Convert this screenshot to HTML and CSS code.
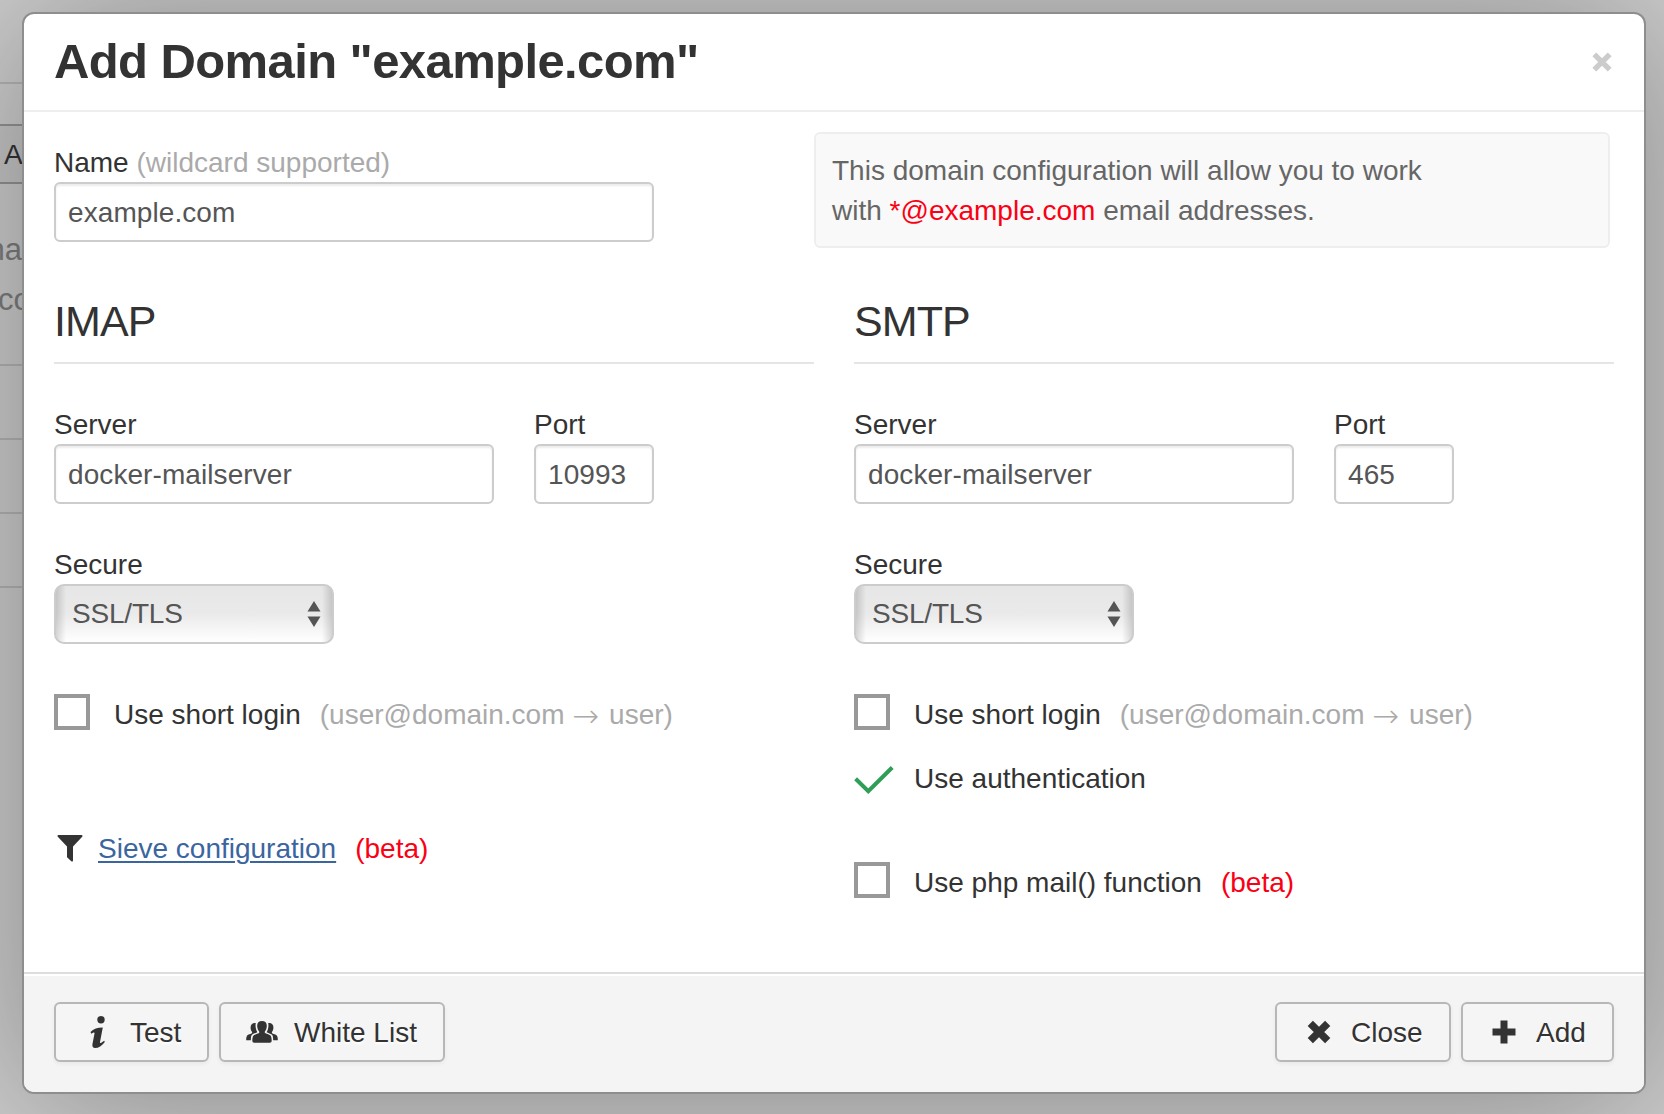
FILE: index.html
```html
<!DOCTYPE html>
<html lang="en">
<head>
<meta charset="utf-8">
<title>Add Domain</title>
<link rel="stylesheet" href="styles.css">
</head>
<body>
<div class="backdrop">
  <div class="bg-rule bg-rule-top"></div>
  <div class="bg-button">A</div>
  <div class="bg-text bg-text-one"><span>ma</span></div>
  <div class="bg-text bg-text-two"><span>co</span></div>
  <div class="bg-table"><i></i><i></i><i></i><i></i></div>
</div>
<div class="modal">
  <header class="modal-header">
    <h3 class="title">Add Domain "example.com"</h3>
    <span class="dismiss"><svg width="20" height="20" viewBox="0 0 20 20"><path d="M2.300 2.300 17.700 17.700M17.700 2.300 2.300 17.700" stroke="#ccc" stroke-width="5.400"/></svg></span>
  </header>
  <main class="modal-body">
    <section class="name-row">
      <div class="field field-name">
        <label class="label">Name <span class="hint">(wildcard supported)</span></label>
        <div class="input">example.com</div>
      </div>
      <div class="alert">This domain configuration will allow you to work<br>with <span class="wild">*@example.com</span> email addresses.</div>
    </section>
    <div class="columns">
      <section class="column">
        <h4 class="legend">IMAP</h4>
        <div class="server-row">
          <div class="field field-server"><label class="label">Server</label><div class="input">docker-mailserver</div></div>
          <div class="field field-port"><label class="label">Port</label><div class="input">10993</div></div>
        </div>
        <div class="field field-secure">
          <label class="label">Secure</label>
          <div class="select">SSL/TLS<svg width="14" height="26" viewBox="0 0 14 26"><path d="M0.500 10.500 7 0l6.500 10.500zM0.500 15.500h13L7 26z" fill="#555"/></svg></div>
        </div>
        <div class="check-row"><span class="box"></span><span class="check-label">Use short login</span><span class="check-hint">(user@domain.com <span class="arrow">→</span> user)</span></div>
        <div class="sieve-row">
          <svg class="funnel" width="26" height="27" viewBox="0 0 26 27"><path d="M1.500 0h23c1 0 1.300 1 .7 1.700L16 11.500V25.500c0 1-1 1.300-1.700.7l-4-3.700c-.2-.2-.3-.5-.3-.8V11.500L.8 1.700C.2 1 .5 0 1.500 0z" fill="#333"/></svg>
          <a class="link">Sieve configuration</a><span class="beta">(beta)</span>
        </div>
      </section>
      <section class="column">
        <h4 class="legend">SMTP</h4>
        <div class="server-row">
          <div class="field field-server"><label class="label">Server</label><div class="input">docker-mailserver</div></div>
          <div class="field field-port"><label class="label">Port</label><div class="input">465</div></div>
        </div>
        <div class="field field-secure">
          <label class="label">Secure</label>
          <div class="select">SSL/TLS<svg width="14" height="26" viewBox="0 0 14 26"><path d="M0.500 10.500 7 0l6.500 10.500zM0.500 15.500h13L7 26z" fill="#555"/></svg></div>
        </div>
        <div class="check-row"><span class="box"></span><span class="check-label">Use short login</span><span class="check-hint">(user@domain.com <span class="arrow">→</span> user)</span></div>
        <div class="check-row check-auth"><svg class="tick" width="40" height="28" viewBox="0 0 40 28"><path d="M1.600 12.800 14.300 25.200 38.200 1.500" fill="none" stroke="#2f9e57" stroke-width="4"/></svg><span class="check-label">Use authentication</span></div>
        <div class="check-row check-php"><span class="box"></span><span class="check-label">Use php mail() function</span><span class="check-hint beta">(beta)</span></div>
      </section>
    </div>
  </main>
  <footer class="modal-footer">
    <div class="btn btn-test"><svg width="16" height="32" viewBox="0 0 16 32"><circle cx="11" cy="3.800" r="3.700" fill="#333"/><path d="M0.500 16C3.500 13 8 11.500 12.800 11.600L10 26c-.2 1.200.4 1.400 1.600.5l2.600-1.800.6 1.200C12 29.800 8.500 32 5.200 32 2.600 32 2 30.300 2.500 27.800L4.500 17.500c.2-1-.4-1.300-1.500-.8L1.300 17.800z" fill="#333"/></svg>Test</div>
    <div class="btn btn-white"><svg width="32" height="22" viewBox="0 0 32 22" fill="#333"><path d="M16 0c-3.400 0-5 2.300-4.800 5.200.1 2.700 1.200 4.300 2 5.300v1.300c0 .7-5.500 1.700-6.200 3.400C6.400 16.700 6.200 19 6.400 20.300 6.600 21.300 7.200 21.700 8 21.700h16c.8 0 1.400-.4 1.600-1.400.2-1.300 0-3.600-.6-5.100-.7-1.700-6.200-2.700-6.200-3.400v-1.300c.8-1 1.900-2.600 2-5.300C21 2.300 19.400 0 16 0z"/><path d="M9.800 2.100C6.300 1.600 4.300 4 4.600 7c.1 1.800.7 3 1.500 3.900v1.200C5.500 13 1.500 13.500.8 15.200c-.6 1.200-.6 2.800-.6 4h4.600c.1-3 .3-4.800 1.500-5.700 1-.8 3.400-1.500 5.100-2.300C9.800 9 9.100 5 9.800 2.100z"/><path d="M22.200 2.100c3.500-.5 5.500 1.900 5.200 4.900-.1 1.800-.7 3-1.500 3.900v1.200c.6.900 4.600 1.400 5.300 3.100.6 1.200.6 2.800.6 4h-4.600c-.1-3-.3-4.800-1.500-5.700-1-.8-3.400-1.500-5.100-2.300 1.600-2.200 2.300-6.200 1.600-9.100z"/></svg>White List</div>
    <div class="spacer"></div>
    <div class="btn btn-close"><svg width="24" height="24" viewBox="0 0 24 24"><path d="M3.300 3.300 20.700 20.700M20.700 3.300 3.300 20.700" stroke="#333" stroke-width="7.400"/></svg>Close</div>
    <div class="btn btn-add"><svg width="24" height="24" viewBox="0 0 24 24"><path d="M0.500 12h23M12 0.500v23" stroke="#333" stroke-width="7"/></svg>Add</div>
  </footer>
</div>
</body>
</html>
```
FILE: styles.css
```css
* { box-sizing: border-box; }
body {
  margin: 0;
  width: 1664px;
  height: 1114px;
  overflow: hidden;
  position: relative;
  background: #cdcdcd;
  font: 28px/40px "Liberation Sans", Arial, sans-serif;
  color: #333;
}
.backdrop { position: absolute; inset: 0; overflow: hidden; }
.bg-rule { position: absolute; left: 0; width: 30px; height: 2px; background: #b4b4b4; }
.bg-rule-top { top: 82px; }
.bg-button {
  position: absolute; left: -100px; top: 124px; width: 300px; height: 60px;
  border: 2px solid #939393; background: #c6c6c6; padding: 9px 0 0 102px;
  white-space: nowrap;
}
.bg-text { position: absolute; left: 0; width: 24px; height: 40px; overflow: hidden; color: #7d7d7d; font-size: 31px; }
.bg-text-one { top: 230px; }
.bg-text-one span { margin-left: -21px; }
.bg-text-two { top: 280px; }
.bg-text-two span { margin-left: -2px; }
.bg-text-one span, .bg-text-two span { display: inline-block; }
.bg-table { position: absolute; left: 0; top: 364px; width: 30px; }
.bg-table i { display: block; height: 2px; margin-bottom: 72px; background: #b4b4b4; }

.modal {
  position: relative;
  margin: 12px 18px 0 22px;
  height: 1082px;
  display: flex;
  flex-direction: column;
  border: 2px solid #8e8e8e;
  border-radius: 12px;
  background: #fff;
  box-shadow: 0 6px 160px rgba(0, 0, 0, .35);
}
.modal-header {
  height: 98px;
  padding: 0 30px;
  display: flex;
  align-items: center;
  justify-content: space-between;
  border-bottom: 2px solid #eee;
}
.title { margin: 0 0 2px; font-size: 49px; line-height: 60px; font-weight: bold; letter-spacing: -.6px; }
.dismiss { display: flex; margin-right: 2px; }
.modal-body { height: 860px; padding: 20px 30px 0; }
.name-row { display: flex; justify-content: space-between; height: 166px; }
.field { display: flex; flex-direction: column; }
.field-name { width: 600px; padding-top: 10px; }
.label { height: 40px; padding-top: 1px; white-space: pre; }
.hint, .check-hint { color: #aaa; }
.input {
  height: 60px;
  padding: 9px 12px 7px;
  border: 2px solid #ccc;
  border-radius: 6px;
  color: #555;
  background: #fff;
  letter-spacing: .08px;
  box-shadow: inset 0 2px 2px rgba(0, 0, 0, .075);
}
.alert {
  width: 796px;
  height: 116px;
  margin-right: 4px;
  padding: 17px 16px 15px;
  border: 2px solid #eee;
  border-radius: 6px;
  background: #f9f9f9;
  color: #666;
}
.wild, .beta { color: #fa0014; }
.columns { display: flex; gap: 40px; }
.column { width: 760px; }
.legend {
  margin: 0 0 40px;
  height: 66px;
  border-bottom: 2px solid #e5e5e5;
  font-size: 43px;
  line-height: 46px;
  font-weight: normal;
  letter-spacing: -.9px;
}
.server-row { display: flex; gap: 40px; }
.field-server { width: 440px; }
.field-port { width: 120px; }
.field-secure { width: 280px; margin-top: 40px; }
.select {
  height: 60px;
  padding: 0 11px 0 16px;
  display: flex;
  align-items: center;
  justify-content: space-between;
  border: 2px solid #ccc;
  border-radius: 10px;
  color: #555;
  letter-spacing: -.2px;
  background:
    linear-gradient(90deg, rgba(0, 0, 0, .15), transparent 10px, transparent calc(100% - 10px), rgba(0, 0, 0, .15)),
    linear-gradient(#e6e6e6, #eaeaea 50%, #fff);
}
.check-row { display: flex; height: 40px; margin-top: 51px; align-items: center; white-space: pre; }
.box { width: 36px; height: 36px; border: 4px solid #999; flex: none; margin: -6px 24px 0 0; }
.check-hint { margin-left: 19px; }
.arrow { display: inline-block; width: 29px; height: 28px; line-height: 28px; font-family: "DejaVu Sans", sans-serif; font-weight: 200; font-size: 32px; vertical-align: -3px; }
.check-auth { margin-top: 24px; }
.tick { margin: 2px 20px 0 0; }
.check-php { margin-top: 64px; }
.check-row .beta { color: #fa0014; }
.sieve-row { display: flex; height: 40px; align-items: center; margin-top: 94px; padding-left: 3px; }
.funnel { margin-top: -1px; }
.link { margin-left: 15px; color: #3b659f; text-decoration: underline; text-decoration-thickness: 2px; text-underline-offset: 3px; }
.sieve-row .beta { margin-left: 19px; }
.modal-footer {
  flex: 1;
  display: flex;
  gap: 10px;
  padding: 28px 30px 0;
  border-top: 2px solid #ddd;
  border-radius: 0 0 10px 10px;
  background: #f4f4f4;
  box-shadow: inset 0 2px 0 #fff;
}
.spacer { flex: 1; }
.btn {
  height: 60px;
  padding-top: 1px;
  display: flex;
  align-items: center;
  border: 2px solid #b7b7b7;
  border-radius: 6px;
  background: #f5f5f5;
  text-shadow: 0 2px 2px #fff;
  box-shadow: 0 2px 4px rgba(0, 0, 0, .05);
  white-space: nowrap;
}
.btn svg { margin-top: -1px; }
.btn-test { width: 155px; padding-left: 34px; gap: 24px; }
.btn-white { width: 226px; padding-left: 25px; gap: 16px; }
.btn-close { width: 176px; padding-left: 30px; gap: 20px; }
.btn-add { width: 153px; padding-left: 29px; gap: 20px; }
```
